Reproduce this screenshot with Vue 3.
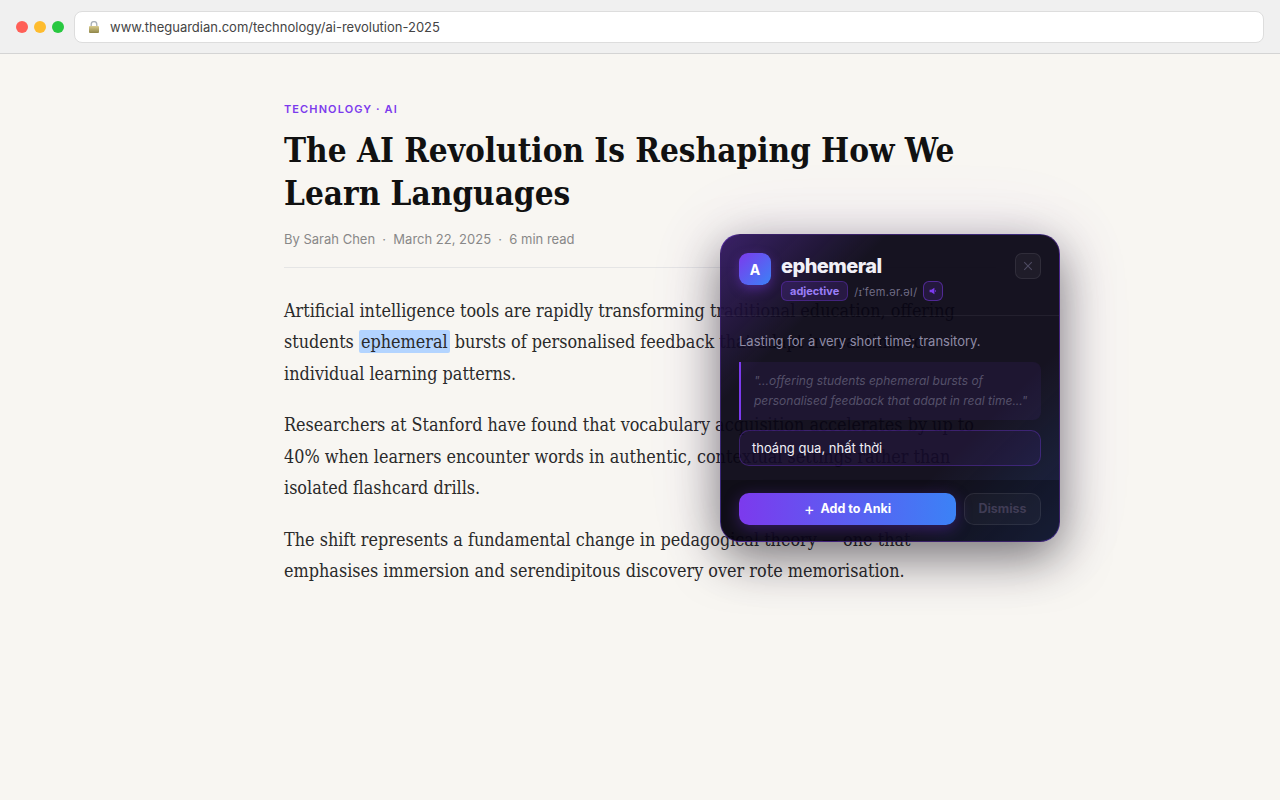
<template>
  <div class="page">
    <header class="chrome">
      <div class="lights">
        <span class="light red"></span>
        <span class="light yellow"></span>
        <span class="light green"></span>
      </div>
      <div class="address">
        <svg class="lock" width="10" height="12" viewBox="0 0 10 12">
          <defs>
            <linearGradient id="lockBody" x1="0" y1="0" x2="0" y2="1">
              <stop offset="0" stop-color="#d9cb8e" />
              <stop offset="1" stop-color="#8f8648" />
            </linearGradient>
          </defs>
          <path d="M2.2 5.5V3.4a2.8 2.8 0 0 1 5.6 0v2.1" fill="none" stroke="#a9b0b8" stroke-width="1.3" />
          <rect x="0" y="5" width="10" height="7" rx="1" fill="url(#lockBody)" />
        </svg>
        <span class="url">www.theguardian.com/technology/ai-revolution-2025</span>
      </div>
    </header>

    <main class="article">
      <div class="kicker">TECHNOLOGY · AI</div>
      <h1 class="title">The AI Revolution Is Reshaping How We<br />Learn Languages</h1>
      <div class="meta">
        <span>By Sarah Chen</span>
        <span>·</span>
        <span>March 22, 2025</span>
        <span>·</span>
        <span>6 min read</span>
      </div>
      <p>Artificial intelligence tools are rapidly transforming traditional education, offering<br />students <mark class="hl">ephemeral</mark> bursts of personalised feedback that adapt in real time to<br />individual learning patterns.</p>
      <p>Researchers at Stanford have found that vocabulary acquisition accelerates by up to<br />40% when learners encounter words in authentic, contextual settings rather than<br />isolated flashcard drills.</p>
      <p>The shift represents a fundamental change in pedagogical theory — one that<br />emphasises immersion and serendipitous discovery over rote memorisation.</p>
    </main>

    <section class="popup">
      <div class="pop-head">
        <div class="logo">A</div>
        <div class="head-text">
          <div class="word">ephemeral</div>
          <div class="word-info">
            <span class="pos">adjective</span>
            <span class="ipa">/ɪˈfem.ər.əl/</span>
            <button class="speak">
              <svg width="8" height="8" viewBox="0 0 8 8"><path d="M.6 2.7h1.8L5.4.8v6.4L2.4 5.3H.6z" fill="#7c3aed" /><path d="M6.3 3.1a1.2 1.2 0 0 1 0 1.8" fill="none" stroke="#7c3aed" stroke-width=".7" /></svg>
            </button>
          </div>
        </div>
        <button class="close">
          <svg width="10" height="10" viewBox="0 0 10 10"><path d="M1.2 1.2l7.6 7.6M8.8 1.2l-7.6 7.6" stroke="#4e4b62" stroke-width="1.1" fill="none" /></svg>
        </button>
      </div>
      <div class="pop-body">
        <div class="definition">Lasting for a very short time; transitory.</div>
        <div class="quote">"...offering students ephemeral bursts of personalised feedback that adapt in real time..."</div>
        <div class="translation">thoáng qua, nhất thời</div>
      </div>
      <div class="pop-foot">
        <button class="add"><span class="plus">+</span> Add to Anki</button>
        <button class="dismiss">Dismiss</button>
      </div>
    </section>
  </div>
</template>

<script setup>
</script>

<style>
html, body {
  margin: 0;
  background: #f8f6f2;
}
</style>

<style scoped>
.page {
  position: relative;
  height: 800px;
  overflow: hidden;
  background: #f8f6f2;
  font-family: Inter, "Noto Sans", sans-serif;
}
.chrome {
  height: 54px;
  box-sizing: border-box;
  display: flex;
  align-items: center;
  padding: 0 16px;
  gap: 10px;
  background: #f0f0f0;
  border-bottom: 1px solid #d4d4d4;
}
.lights {
  display: flex;
  gap: 6px;
}
.light {
  width: 12px;
  height: 12px;
  border-radius: 50%;
}
.red { background: #ff5f57; }
.yellow { background: #febc2e; }
.green { background: #28c840; }
.address {
  flex: 1;
  height: 32px;
  box-sizing: border-box;
  display: flex;
  align-items: center;
  gap: 11px;
  padding: 0 14px;
  background: #fff;
  border: 1px solid #ddd;
  border-radius: 8px;
}
.url {
  font-size: 13px;
  color: #444;
}
.article {
  width: 712px;
  margin: 0 auto;
  padding-top: 48px;
}
.kicker {
  font-size: 11px;
  font-weight: 600;
  letter-spacing: 1.1px;
  line-height: 14px;
  color: #7c3aed;
}
.title {
  margin: 13px 0 16px;
  font-family: "DejaVu Serif Condensed", "DejaVu Serif", serif;
  font-size: 33px;
  font-weight: 700;
  line-height: 43px;
  color: #111;
}
.meta {
  display: flex;
  gap: 7.25px;
  font-size: 13px;
  line-height: 16px;
  color: #888;
  padding-bottom: 20px;
  border-bottom: 1px solid #e5e5e5;
  margin-bottom: 27px;
}
p {
  margin: 0 0 20px;
  font-family: "DejaVu Serif Condensed", "DejaVu Serif", serif;
  font-size: 17.85px;
  line-height: 31.45px;
  color: #2a2a2a;
}
.hl {
  background: #b3d4ff;
  color: inherit;
  border-radius: 2px;
  padding: 1px 2px;
}
.popup {
  position: absolute;
  left: 720px;
  top: 234px;
  width: 340px;
  height: 308px;
  box-sizing: border-box;
  display: flex;
  flex-direction: column;
  border: 1px solid rgba(124, 58, 237, 0.35);
  border-radius: 20px;
  overflow: hidden;
  background:
    linear-gradient(135deg, rgba(124, 58, 237, 0.34) 0%, transparent 26%, transparent 70%, rgba(59, 130, 246, 0.18) 100%),
    rgba(8, 5, 20, 0.945);
  box-shadow: 0 16px 48px rgba(0, 0, 0, 0.5), 0 0 80px rgba(124, 58, 237, 0.1);
}
.pop-head {
  height: 81px;
  box-sizing: border-box;
  flex-shrink: 0;
  display: flex;
  gap: 10px;
  padding: 18px 18px 0;
  border-bottom: 1px solid rgba(255, 255, 255, 0.06);
}
.logo {
  width: 32px;
  height: 32px;
  flex-shrink: 0;
  display: flex;
  align-items: center;
  justify-content: center;
  border-radius: 9px;
  background: linear-gradient(135deg, #7c3aed, #3b82f6);
  box-shadow: 0 4px 12px rgba(124, 58, 237, 0.4);
  color: #fff;
  font-size: 14px;
  font-weight: 700;
}
.head-text {
  flex: 1;
}
.word {
  font-size: 20px;
  font-weight: 800;
  letter-spacing: -0.55px;
  line-height: 24px;
  margin-top: 1px;
  color: #f1f0f7;
}
.word-info {
  display: flex;
  align-items: center;
  gap: 6px;
  margin-top: 3px;
}
.pos {
  box-sizing: border-box;
  height: 20px;
  line-height: 18px;
  padding: 0 8px;
  font-size: 11px;
  font-weight: 700;
  color: #9b7ef8;
  background: rgba(124, 58, 237, 0.17);
  border: 1px solid rgba(124, 58, 237, 0.35);
  border-radius: 6px;
}
.ipa {
  font-size: 11px;
  color: #716d86;
  letter-spacing: 0.36px;
}
.speak {
  width: 20px;
  height: 20px;
  padding: 0;
  display: flex;
  align-items: center;
  justify-content: center;
  background: rgba(124, 58, 237, 0.14);
  border: 1px solid rgba(124, 58, 237, 0.5);
  border-radius: 6px;
}
.close {
  width: 26px;
  height: 26px;
  padding: 0;
  display: flex;
  align-items: center;
  justify-content: center;
  background: rgba(255, 255, 255, 0.04);
  border: 1px solid rgba(255, 255, 255, 0.08);
  border-radius: 7px;
}
.pop-body {
  flex: 1;
  padding: 16px 18px 0;
}
.definition {
  font-size: 13px;
  line-height: 18px;
  color: #8f8ba6;
}
.quote {
  box-sizing: border-box;
  height: 58px;
  margin-top: 12px;
  padding: 9px 12px 9px 13px;
  font-size: 12px;
  font-style: italic;
  line-height: 20px;
  color: #55516a;
  background: rgba(124, 58, 237, 0.08);
  border-left: 2px solid #7c3aed;
  border-radius: 0 8px 8px 0;
}
.translation {
  box-sizing: border-box;
  height: 36px;
  margin-top: 10px;
  padding: 0 12px;
  display: flex;
  align-items: center;
  font-size: 13px;
  color: #f1f0f7;
  background: rgba(124, 58, 237, 0.09);
  border: 1px solid rgba(124, 58, 237, 0.32);
  border-radius: 10px;
}
.pop-foot {
  height: 61px;
  box-sizing: border-box;
  flex-shrink: 0;
  display: flex;
  gap: 8px;
  padding: 13px 18px 0;
  background: rgba(0, 0, 0, 0.25);
}
.add {
  flex: 1;
  height: 32px;
  display: flex;
  align-items: center;
  justify-content: center;
  gap: 6px;
  padding: 0 0 1px;
  font-family: inherit;
  font-size: 12.5px;
  font-weight: 700;
  color: #fff;
  border: 0;
  border-radius: 10px;
  background: linear-gradient(90deg, #7c3aed, #3b82f6);
  box-shadow: 0 4px 16px rgba(124, 58, 237, 0.35);
}
.plus {
  font-size: 16px;
  font-weight: 400;
  line-height: 1;
}
.dismiss {
  width: 77px;
  height: 32px;
  padding: 0 0 1px;
  font-family: inherit;
  font-size: 12.5px;
  font-weight: 700;
  color: #403c55;
  background: rgba(255, 255, 255, 0.03);
  border: 1px solid rgba(255, 255, 255, 0.08);
  border-radius: 10px;
}
</style>
